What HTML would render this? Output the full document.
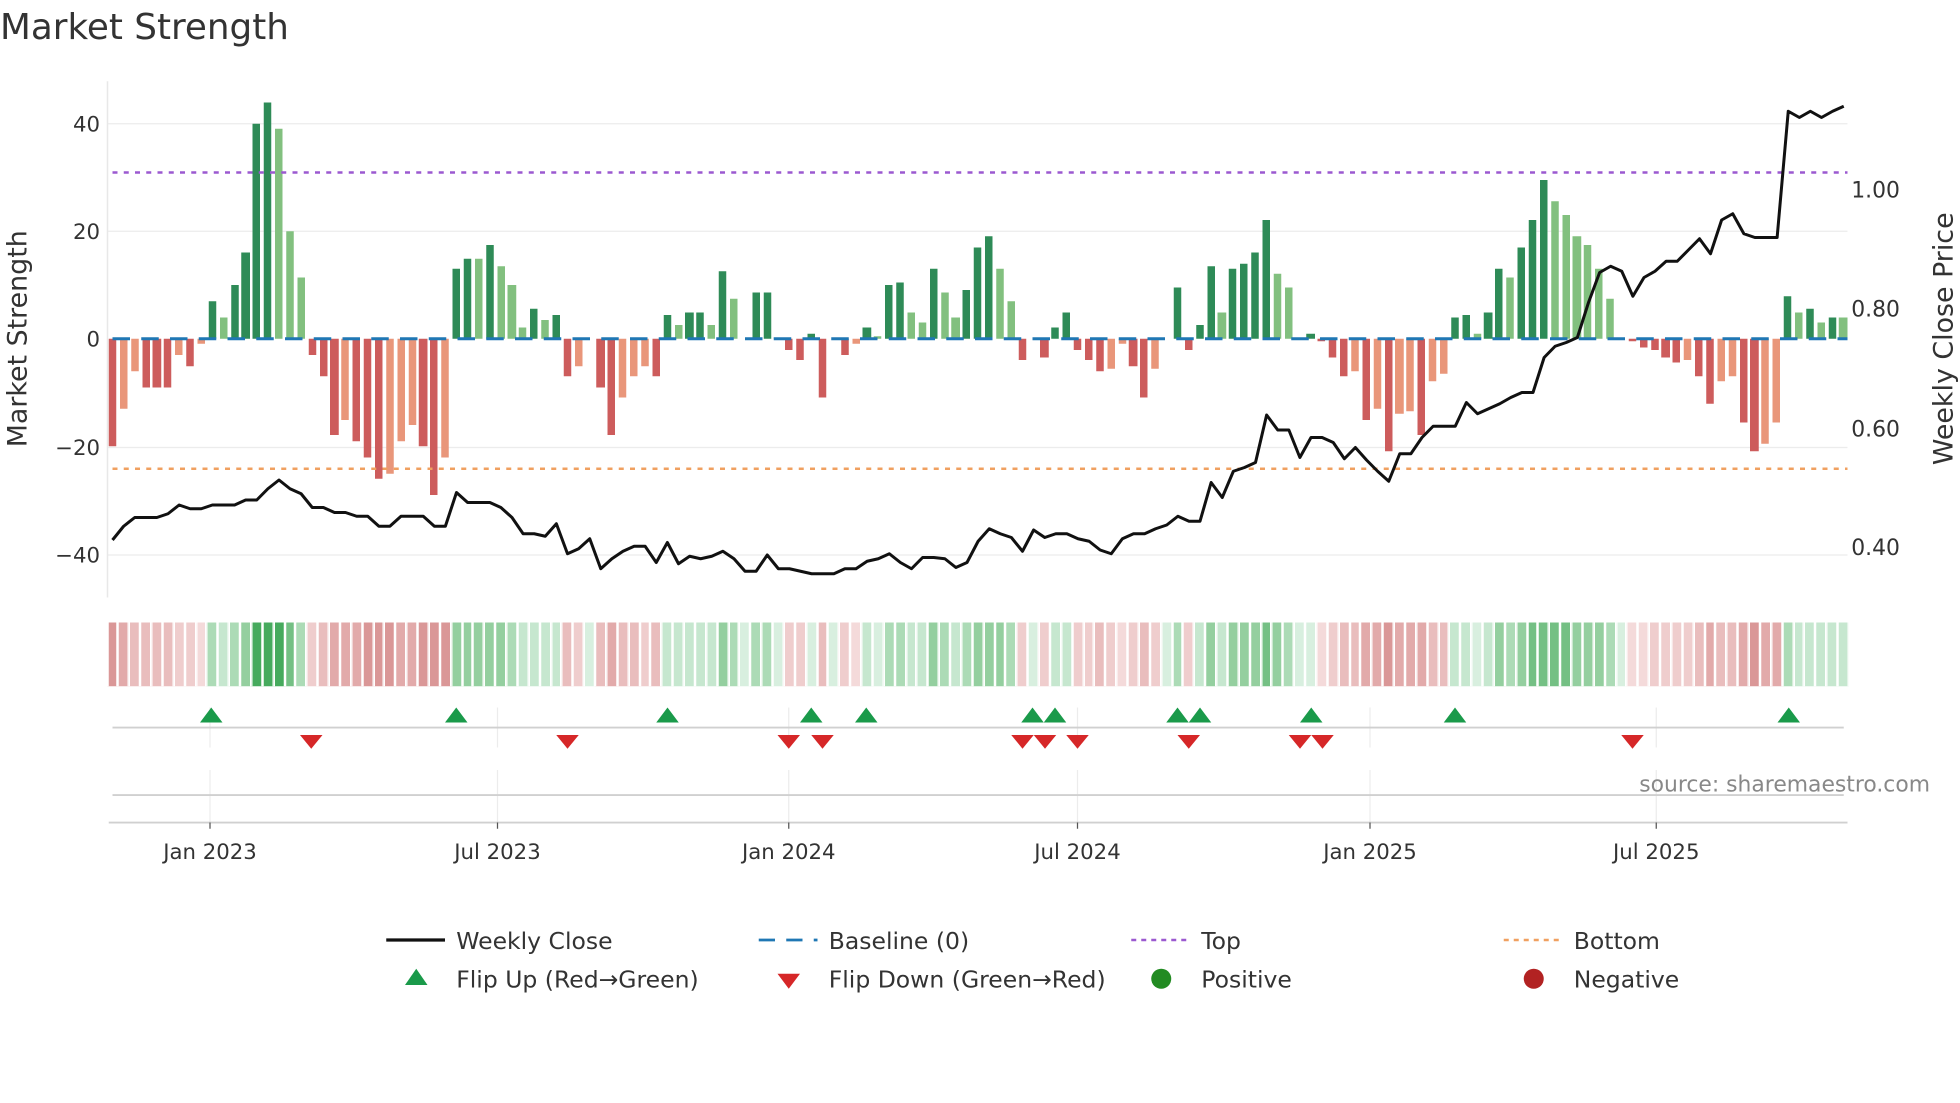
<!DOCTYPE html>
<html><head><meta charset="utf-8"><style>
html,body{margin:0;padding:0;background:#fff;}
#w{position:relative;width:1568px;height:882px;transform:scale(1.25);transform-origin:0 0;overflow:hidden;}
svg{position:absolute;left:0;top:0;display:block;font-family:"DejaVu Sans","Liberation Sans",sans-serif;}
.row{position:absolute;left:85.56px;display:flex;}
#bars{top:0;height:542px;}
#bars b{display:block;flex:none;width:8.878px;height:542px;position:relative;}
#bars i{position:absolute;left:1.34px;width:6.2px;}
.a,.b{bottom:50%}.c,.e{top:50%}
.a{background:#2e8b57}.b{background:#82c07f}.c{background:#cd5c5c}.e{background:#e9967a}
#heat{top:498px;height:51px;}
#heat u{display:block;flex:none;width:8.878px;height:51px;box-sizing:border-box;border-left:0.74px solid #fff;border-right:0.74px solid #fff;}
.g0{background:#d8efdf}.g1{background:#c6e7cf}.g2{background:#acdbb6}.g3{background:#94cf9f}.g4{background:#74c084}.g5{background:#46aa5d}
.r0{background:#f4dada}.r1{background:#efcdcd}.r2{background:#e9bdbd}.r3{background:#e2aaaa}.r4{background:#da9797}.r5{background:#d08080}
</style></head><body><div id="w">
<svg width="1568" height="882" viewBox="0 0 1568 882" xmlns="http://www.w3.org/2000/svg">
<text x="0" y="31" font-size="28.6" fill="#333">Market Strength</text>
<g stroke="#ececec" stroke-width="1">
<line x1="86" y1="99" x2="1478" y2="99"/><line x1="86" y1="185" x2="1478" y2="185"/><line x1="86" y1="358" x2="1478" y2="358"/><line x1="86" y1="444" x2="1478" y2="444"/>
</g>
<line x1="86" y1="65" x2="86" y2="478" stroke="#e8e8e8" stroke-width="1.2"/>
<g font-size="17" fill="#333" text-anchor="end">
<text x="80" y="105">40</text><text x="80" y="191">20</text><text x="80" y="277">0</text><text x="80" y="364">−20</text><text x="80" y="450">−40</text>
</g>
<g font-size="17.5" fill="#333">
<text x="1481" y="158">1.00</text><text x="1481" y="253">0.80</text><text x="1481" y="349">0.60</text><text x="1481" y="444">0.40</text>
</g>
<text transform="translate(21,271) rotate(-90)" font-size="21.5" fill="#333" text-anchor="middle">Market Strength</text>
<text transform="translate(1562,271) rotate(-90)" font-size="21.5" fill="#333" text-anchor="middle">Weekly Close Price</text>
<g stroke="#ececec" stroke-width="1">
<line x1="168" y1="566" x2="168" y2="598"/><line x1="398" y1="566" x2="398" y2="598"/><line x1="631" y1="566" x2="631" y2="598"/><line x1="862" y1="566" x2="862" y2="598"/><line x1="1096" y1="566" x2="1096" y2="598"/><line x1="1325" y1="566" x2="1325" y2="598"/>
<line x1="168" y1="616" x2="168" y2="658"/><line x1="398" y1="616" x2="398" y2="658"/><line x1="631" y1="616" x2="631" y2="658"/><line x1="862" y1="616" x2="862" y2="658"/><line x1="1096" y1="616" x2="1096" y2="658"/><line x1="1325" y1="616" x2="1325" y2="658"/>
</g>
<line x1="90" y1="582" x2="1475" y2="582" stroke="#d0d0d0" stroke-width="1.5"/>
<line x1="90" y1="636" x2="1475" y2="636" stroke="#d0d0d0" stroke-width="1.5"/>
<line x1="87" y1="658" x2="1478" y2="658" stroke="#d0d0d0" stroke-width="1.5"/>
<text x="1544" y="633" font-size="17.5" fill="#888" text-anchor="end">source: sharemaestro.com</text>
<g stroke="#555" stroke-width="1"><line x1="168" y1="658" x2="168" y2="663"/><line x1="398" y1="658" x2="398" y2="663"/><line x1="631" y1="658" x2="631" y2="663"/><line x1="862" y1="658" x2="862" y2="663"/><line x1="1096" y1="658" x2="1096" y2="663"/><line x1="1325" y1="658" x2="1325" y2="663"/></g>
<g font-size="17" fill="#333" text-anchor="middle">
<text x="168" y="687">Jan 2023</text><text x="398" y="687">Jul 2023</text><text x="631" y="687">Jan 2024</text><text x="862" y="687">Jul 2024</text><text x="1096" y="687">Jan 2025</text><text x="1325" y="687">Jul 2025</text>
</g>
<g font-size="18.8" fill="#333">
<line x1="309" y1="752" x2="356" y2="752" stroke="#111" stroke-width="2.6"/>
<text x="365" y="759">Weekly Close</text>
<line x1="607" y1="752" x2="654" y2="752" stroke="#1f77b4" stroke-width="2.2" stroke-dasharray="13 9"/>
<text x="663" y="759">Baseline (0)</text>
<line x1="905" y1="752" x2="952" y2="752" stroke="#9b59d0" stroke-width="2" stroke-dasharray="4 4"/>
<text x="961" y="759">Top</text>
<line x1="1203" y1="752" x2="1250" y2="752" stroke="#f0a060" stroke-width="2" stroke-dasharray="4 4"/>
<text x="1259" y="759">Bottom</text>
<polygon points="324,788 342,788 333,775" fill="#1a9a4a"/>
<text x="365" y="790">Flip Up (Red→Green)</text>
<polygon points="622,779 640,779 631,791" fill="#d62728"/>
<text x="663" y="790">Flip Down (Green→Red)</text>
<circle cx="929" cy="783" r="8" fill="#228b22"/>
<text x="961" y="790">Positive</text>
<circle cx="1227" cy="783" r="8" fill="#b22222"/>
<text x="1259" y="790">Negative</text>
</g>
</svg>
<div class="row" id="bars"><b><i class="c" style="height:86px"></i></b><b><i class="e" style="height:55.9px"></i></b><b><i class="e" style="height:25.8px"></i></b><b><i class="c" style="height:38.7px"></i></b><b><i class="c" style="height:38.7px"></i></b><b><i class="c" style="height:38.7px"></i></b><b><i class="e" style="height:12.9px"></i></b><b><i class="c" style="height:21.5px"></i></b><b><i class="e" style="height:4.3px"></i></b><b><i class="a" style="height:30.1px"></i></b><b><i class="b" style="height:17.2px"></i></b><b><i class="a" style="height:43px"></i></b><b><i class="a" style="height:68.8px"></i></b><b><i class="a" style="height:172px"></i></b><b><i class="a" style="height:189.2px"></i></b><b><i class="b" style="height:167.7px"></i></b><b><i class="b" style="height:86px"></i></b><b><i class="b" style="height:49.5px"></i></b><b><i class="c" style="height:12.9px"></i></b><b><i class="c" style="height:30.1px"></i></b><b><i class="c" style="height:77.4px"></i></b><b><i class="e" style="height:64.5px"></i></b><b><i class="c" style="height:81.7px"></i></b><b><i class="c" style="height:94.6px"></i></b><b><i class="c" style="height:111.8px"></i></b><b><i class="e" style="height:107.5px"></i></b><b><i class="e" style="height:81.7px"></i></b><b><i class="e" style="height:68.8px"></i></b><b><i class="c" style="height:86px"></i></b><b><i class="c" style="height:124.7px"></i></b><b><i class="e" style="height:94.6px"></i></b><b><i class="a" style="height:55.9px"></i></b><b><i class="a" style="height:64.5px"></i></b><b><i class="b" style="height:64.5px"></i></b><b><i class="a" style="height:75.3px"></i></b><b><i class="b" style="height:58px"></i></b><b><i class="b" style="height:43px"></i></b><b><i class="b" style="height:8.6px"></i></b><b><i class="a" style="height:23.7px"></i></b><b><i class="b" style="height:15px"></i></b><b><i class="a" style="height:19.4px"></i></b><b><i class="c" style="height:30.1px"></i></b><b><i class="e" style="height:21.5px"></i></b><b></b><b><i class="c" style="height:38.7px"></i></b><b><i class="c" style="height:77.4px"></i></b><b><i class="e" style="height:47.3px"></i></b><b><i class="e" style="height:30.1px"></i></b><b><i class="e" style="height:21.5px"></i></b><b><i class="c" style="height:30.1px"></i></b><b><i class="a" style="height:19.4px"></i></b><b><i class="b" style="height:10.8px"></i></b><b><i class="a" style="height:21.5px"></i></b><b><i class="a" style="height:21.5px"></i></b><b><i class="b" style="height:10.8px"></i></b><b><i class="a" style="height:53.8px"></i></b><b><i class="b" style="height:32.3px"></i></b><b></b><b><i class="a" style="height:36.6px"></i></b><b><i class="a" style="height:36.6px"></i></b><b><i class="b" style="height:1.3px"></i></b><b><i class="c" style="height:8.6px"></i></b><b><i class="c" style="height:17.2px"></i></b><b><i class="a" style="height:4.3px"></i></b><b><i class="c" style="height:47.3px"></i></b><b></b><b><i class="c" style="height:12.9px"></i></b><b><i class="e" style="height:4.3px"></i></b><b><i class="a" style="height:8.6px"></i></b><b><i class="b" style="height:2.2px"></i></b><b><i class="a" style="height:43px"></i></b><b><i class="a" style="height:45.2px"></i></b><b><i class="b" style="height:21.5px"></i></b><b><i class="b" style="height:12.9px"></i></b><b><i class="a" style="height:55.9px"></i></b><b><i class="b" style="height:36.6px"></i></b><b><i class="b" style="height:17.2px"></i></b><b><i class="a" style="height:38.7px"></i></b><b><i class="a" style="height:73.1px"></i></b><b><i class="a" style="height:81.7px"></i></b><b><i class="b" style="height:55.9px"></i></b><b><i class="b" style="height:30.1px"></i></b><b><i class="c" style="height:17.2px"></i></b><b></b><b><i class="c" style="height:15px"></i></b><b><i class="a" style="height:8.6px"></i></b><b><i class="a" style="height:21.5px"></i></b><b><i class="c" style="height:8.6px"></i></b><b><i class="c" style="height:17.2px"></i></b><b><i class="c" style="height:25.8px"></i></b><b><i class="e" style="height:23.7px"></i></b><b><i class="e" style="height:4.3px"></i></b><b><i class="c" style="height:21.5px"></i></b><b><i class="c" style="height:47.3px"></i></b><b><i class="e" style="height:23.7px"></i></b><b></b><b><i class="a" style="height:40.9px"></i></b><b><i class="c" style="height:8.6px"></i></b><b><i class="a" style="height:10.8px"></i></b><b><i class="a" style="height:58px"></i></b><b><i class="b" style="height:21.5px"></i></b><b><i class="a" style="height:55.9px"></i></b><b><i class="a" style="height:60.2px"></i></b><b><i class="a" style="height:68.8px"></i></b><b><i class="a" style="height:94.6px"></i></b><b><i class="b" style="height:51.6px"></i></b><b><i class="b" style="height:40.9px"></i></b><b></b><b><i class="a" style="height:4.3px"></i></b><b><i class="c" style="height:2.2px"></i></b><b><i class="c" style="height:15px"></i></b><b><i class="c" style="height:30.1px"></i></b><b><i class="e" style="height:25.8px"></i></b><b><i class="c" style="height:64.5px"></i></b><b><i class="e" style="height:55.9px"></i></b><b><i class="c" style="height:90.3px"></i></b><b><i class="e" style="height:60.2px"></i></b><b><i class="e" style="height:58px"></i></b><b><i class="c" style="height:77.4px"></i></b><b><i class="e" style="height:34.4px"></i></b><b><i class="e" style="height:28px"></i></b><b><i class="a" style="height:17.2px"></i></b><b><i class="a" style="height:19.4px"></i></b><b><i class="b" style="height:4.3px"></i></b><b><i class="a" style="height:21.5px"></i></b><b><i class="a" style="height:55.9px"></i></b><b><i class="b" style="height:49.5px"></i></b><b><i class="a" style="height:73.1px"></i></b><b><i class="a" style="height:94.6px"></i></b><b><i class="a" style="height:126.9px"></i></b><b><i class="b" style="height:109.7px"></i></b><b><i class="b" style="height:98.9px"></i></b><b><i class="b" style="height:81.7px"></i></b><b><i class="b" style="height:75.3px"></i></b><b><i class="b" style="height:55.9px"></i></b><b><i class="b" style="height:32.3px"></i></b><b></b><b><i class="c" style="height:2.2px"></i></b><b><i class="c" style="height:6.5px"></i></b><b><i class="c" style="height:8.6px"></i></b><b><i class="c" style="height:15px"></i></b><b><i class="c" style="height:19.4px"></i></b><b><i class="e" style="height:17.2px"></i></b><b><i class="c" style="height:30.1px"></i></b><b><i class="c" style="height:51.6px"></i></b><b><i class="e" style="height:34.4px"></i></b><b><i class="e" style="height:30.1px"></i></b><b><i class="c" style="height:66.7px"></i></b><b><i class="c" style="height:90.3px"></i></b><b><i class="e" style="height:83.9px"></i></b><b><i class="e" style="height:66.7px"></i></b><b><i class="a" style="height:34.4px"></i></b><b><i class="b" style="height:21.5px"></i></b><b><i class="a" style="height:23.7px"></i></b><b><i class="b" style="height:12.9px"></i></b><b><i class="a" style="height:17.2px"></i></b><b><i class="b" style="height:17.2px"></i></b></div>
<div class="row" id="heat"><u class="r4"></u><u class="r3"></u><u class="r2"></u><u class="r2"></u><u class="r2"></u><u class="r2"></u><u class="r1"></u><u class="r1"></u><u class="r0"></u><u class="g2"></u><u class="g1"></u><u class="g2"></u><u class="g3"></u><u class="g5"></u><u class="g5"></u><u class="g5"></u><u class="g4"></u><u class="g2"></u><u class="r1"></u><u class="r2"></u><u class="r3"></u><u class="r3"></u><u class="r3"></u><u class="r4"></u><u class="r4"></u><u class="r4"></u><u class="r3"></u><u class="r3"></u><u class="r4"></u><u class="r4"></u><u class="r4"></u><u class="g3"></u><u class="g3"></u><u class="g3"></u><u class="g3"></u><u class="g3"></u><u class="g2"></u><u class="g1"></u><u class="g1"></u><u class="g1"></u><u class="g1"></u><u class="r2"></u><u class="r1"></u><u class="g0"></u><u class="r2"></u><u class="r3"></u><u class="r2"></u><u class="r2"></u><u class="r1"></u><u class="r2"></u><u class="g1"></u><u class="g1"></u><u class="g1"></u><u class="g1"></u><u class="g1"></u><u class="g3"></u><u class="g2"></u><u class="g0"></u><u class="g2"></u><u class="g2"></u><u class="g0"></u><u class="r1"></u><u class="r1"></u><u class="g0"></u><u class="r2"></u><u class="g0"></u><u class="r1"></u><u class="r0"></u><u class="g1"></u><u class="g0"></u><u class="g2"></u><u class="g2"></u><u class="g1"></u><u class="g1"></u><u class="g3"></u><u class="g2"></u><u class="g1"></u><u class="g2"></u><u class="g3"></u><u class="g3"></u><u class="g3"></u><u class="g2"></u><u class="r1"></u><u class="g0"></u><u class="r1"></u><u class="g1"></u><u class="g1"></u><u class="r1"></u><u class="r1"></u><u class="r2"></u><u class="r1"></u><u class="r0"></u><u class="r1"></u><u class="r2"></u><u class="r1"></u><u class="g0"></u><u class="g2"></u><u class="r1"></u><u class="g1"></u><u class="g3"></u><u class="g1"></u><u class="g3"></u><u class="g3"></u><u class="g3"></u><u class="g4"></u><u class="g3"></u><u class="g2"></u><u class="g0"></u><u class="g0"></u><u class="r0"></u><u class="r1"></u><u class="r2"></u><u class="r2"></u><u class="r3"></u><u class="r3"></u><u class="r4"></u><u class="r3"></u><u class="r3"></u><u class="r3"></u><u class="r2"></u><u class="r2"></u><u class="g1"></u><u class="g1"></u><u class="g0"></u><u class="g1"></u><u class="g3"></u><u class="g2"></u><u class="g3"></u><u class="g4"></u><u class="g4"></u><u class="g4"></u><u class="g4"></u><u class="g3"></u><u class="g3"></u><u class="g3"></u><u class="g2"></u><u class="g0"></u><u class="r0"></u><u class="r0"></u><u class="r1"></u><u class="r1"></u><u class="r1"></u><u class="r1"></u><u class="r2"></u><u class="r3"></u><u class="r2"></u><u class="r2"></u><u class="r3"></u><u class="r4"></u><u class="r3"></u><u class="r3"></u><u class="g2"></u><u class="g1"></u><u class="g1"></u><u class="g1"></u><u class="g1"></u><u class="g1"></u></div>
<svg width="1568" height="882" viewBox="0 0 1568 882" xmlns="http://www.w3.org/2000/svg">
<line x1="90" y1="271" x2="1478" y2="271" stroke="#1f77b4" stroke-width="2.4" stroke-dasharray="14 9"/>
<line x1="90" y1="138" x2="1478" y2="138" stroke="#9b59d0" stroke-width="2" stroke-dasharray="4 5"/>
<line x1="90" y1="375" x2="1478" y2="375" stroke="#f0a060" stroke-width="2" stroke-dasharray="4 5"/>
<polyline fill="none" stroke="#111" stroke-width="2.4" stroke-linejoin="round" points="90,432 98.9,421 107.8,414 116.6,414 125.5,414 134.4,411 143.3,404 152.1,407 161,407 169.9,404 178.8,404 187.7,404 196.5,400 205.4,400 214.3,391 223.2,384 232,391 240.9,395 249.8,406 258.7,406 267.6,410 276.4,410 285.3,413 294.2,413 303.1,421 311.9,421 320.8,413 329.7,413 338.6,413 347.5,421 356.3,421 365.2,394 374.1,402 383,402 391.9,402 400.7,406 409.6,414 418.5,427 427.4,427 436.2,429 445.1,419 454,443 462.9,439 471.8,431 480.6,455 489.5,447 498.4,441 507.3,437 516.1,437 525,450 533.9,434 542.8,451 551.7,445 560.5,447 569.4,445 578.3,441 587.2,447 596,457 604.9,457 613.8,444 622.7,455 631.6,455 640.4,457 649.3,459 658.2,459 667.1,459 675.9,455 684.8,455 693.7,449 702.6,447 711.5,443 720.3,450 729.2,455 738.1,446 747,446 755.9,447 764.7,454 773.6,450 782.5,433 791.4,423 800.2,427 809.1,430 818,441 826.9,424 835.8,430 844.6,427 853.5,427 862.4,431 871.3,433 880.1,440 889,443 897.9,431 906.8,427 915.7,427 924.5,423 933.4,420 942.3,413 951.2,417 960,417 968.9,386 977.8,398 986.7,377 995.6,374 1004.4,370 1013.3,332 1022.2,344 1031.1,344 1039.9,366 1048.8,350 1057.7,350 1066.6,354 1075.5,367 1084.3,358 1093.2,368 1102.1,377 1111,385 1119.8,363 1128.7,363 1137.6,350 1146.5,341 1155.4,341 1164.2,341 1173.1,322 1182,331 1190.9,327 1199.8,323 1208.6,318 1217.5,314 1226.4,314 1235.3,286 1244.1,277 1253,274 1261.9,270 1270.8,242 1279.7,218 1288.5,213 1297.4,217 1306.3,237 1315.2,222 1324,217 1332.9,209 1341.8,209 1350.7,200 1359.6,191 1368.4,203 1377.3,176 1386.2,171 1395.1,187 1403.9,190 1412.8,190 1421.7,190 1430.6,89 1439.5,94 1448.3,89 1457.2,94 1466.1,89 1475,85"/>
<g fill="#1a9a4a">
<polygon points="160,578 178,578 169,566"/><polygon points="356,578 374,578 365,566"/><polygon points="525,578 543,578 534,566"/><polygon points="640,578 658,578 649,566"/><polygon points="684,578 702,578 693,566"/><polygon points="817,578 835,578 826,566"/><polygon points="835,578 853,578 844,566"/><polygon points="933,578 951,578 942,566"/><polygon points="951,578 969,578 960,566"/><polygon points="1040,578 1058,578 1049,566"/><polygon points="1155,578 1173,578 1164,566"/><polygon points="1422,578 1440,578 1431,566"/>
</g>
<g fill="#d62728">
<polygon points="240,588 258,588 249,599"/><polygon points="445,588 463,588 454,599"/><polygon points="622,588 640,588 631,599"/><polygon points="649,588 667,588 658,599"/><polygon points="809,588 827,588 818,599"/><polygon points="827,588 845,588 836,599"/><polygon points="853,588 871,588 862,599"/><polygon points="942,588 960,588 951,599"/><polygon points="1031,588 1049,588 1040,599"/><polygon points="1049,588 1067,588 1058,599"/><polygon points="1297,588 1315,588 1306,599"/>
</g>
</svg>
</div></body></html>
